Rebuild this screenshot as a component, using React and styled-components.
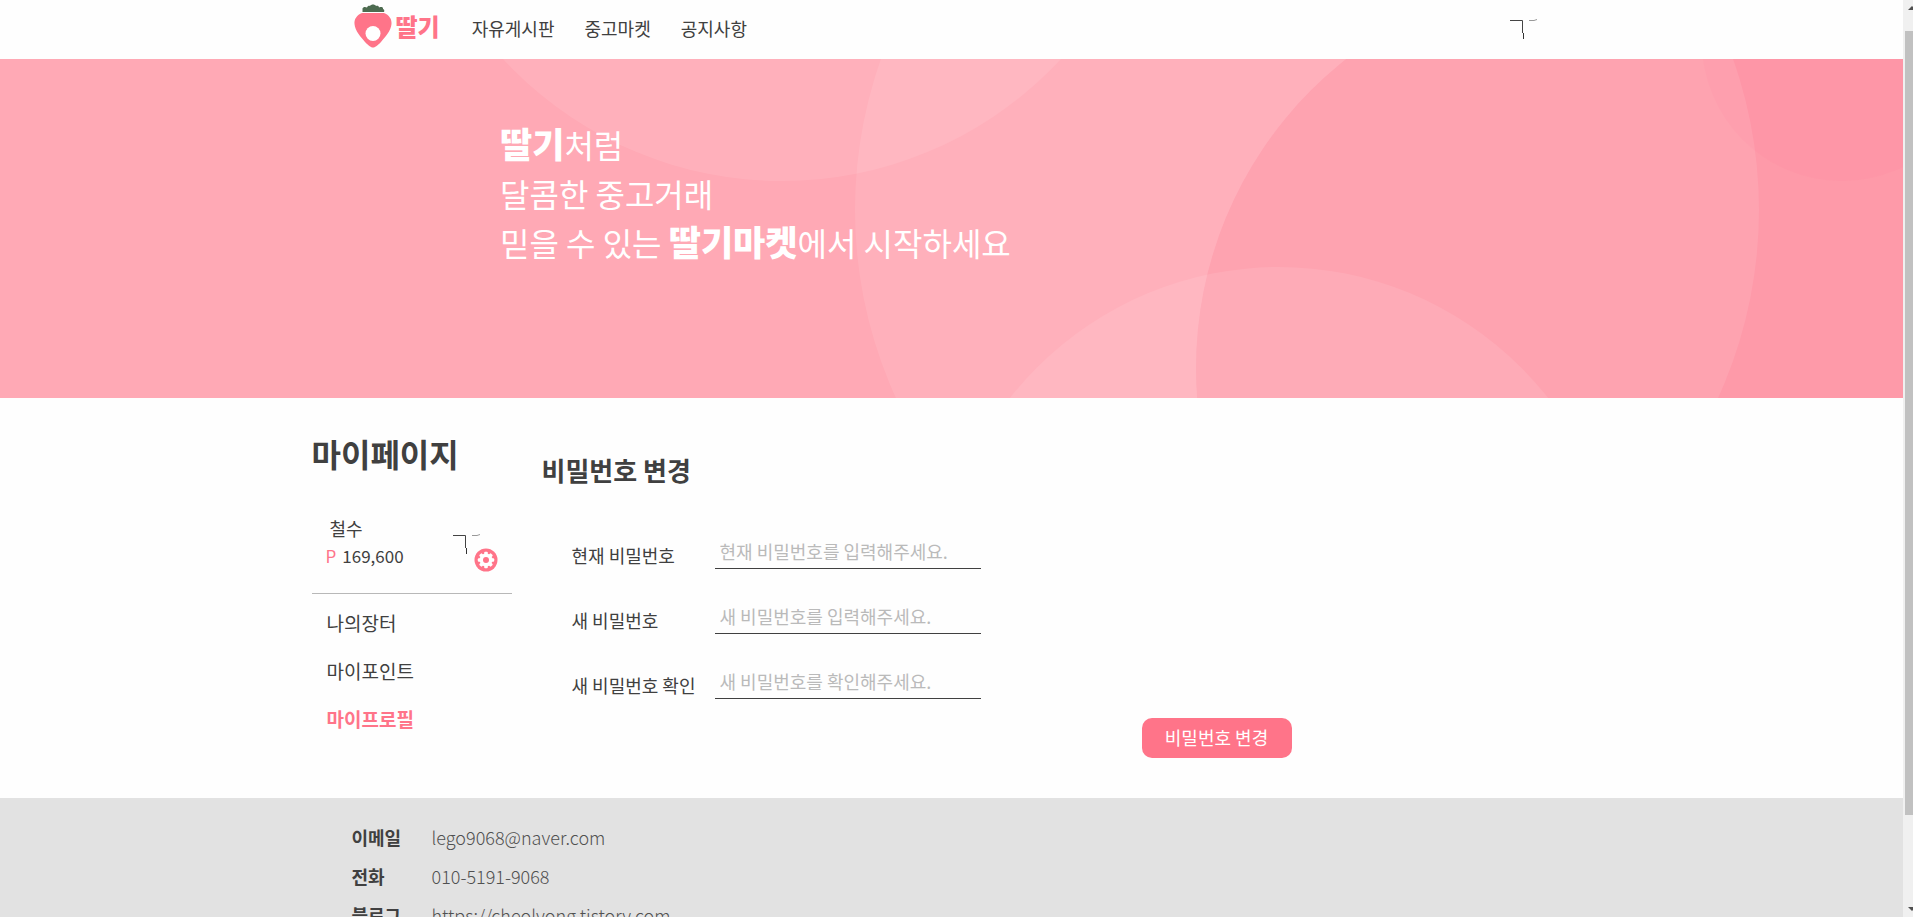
import React from 'react';
import styled, { createGlobalStyle } from 'styled-components';

const menus = ['자유게시판', '중고마켓', '공지사항'];

const sideLinks = [
  { label: '나의장터' },
  { label: '마이포인트' },
  { label: '마이프로필', active: true },
];

const fields = [
  { id: 'current', label: '현재 비밀번호', placeholder: '현재 비밀번호를 입력해주세요.' },
  { id: 'next', label: '새 비밀번호', placeholder: '새 비밀번호를 입력해주세요.' },
  { id: 'confirm', label: '새 비밀번호 확인', placeholder: '새 비밀번호를 확인해주세요.' },
];

const contacts = [
  { label: '이메일', value: 'lego9068@naver.com', href: 'mailto:lego9068@naver.com' },
  { label: '전화', value: '010-5191-9068', href: 'tel:010-5191-9068' },
  { label: '블로그', value: 'https://cheolyong.tistory.com', href: '#blog' },
];

const StrawberryIcon = () => (
  <svg width='38' height='44' viewBox='0 0 38 44' aria-hidden='true'>
    <path
      d='M8 9C3 11 0 15 0.500 20C1 27 7 33 11 38C15 42 17 43.500 19 43.500C21 43.500 23 42 27 38C31 33 37 27 37.500 20C38 15 35 11 30 9Z'
      fill='#ff7489'
    />
    <path
      d='M8.500 8V4.500C9 3 11 2.500 13 3.500C13.500 2 15 1.500 16 2C17 0 21 0 22 2C23.500 1.500 25 2 25 3.500C27 2.500 29.500 3 29 5C30.500 5.500 30.500 7 30 8Z'
      fill='#4d6b50'
    />
    <circle cx='19' cy='29.500' r='7.500' fill='#fff' />
  </svg>
);

const ProfileMark = () => (
  <svg width='28' height='22' viewBox='0 0 28 22' aria-hidden='true'>
    <path d='M0 1.500H12.500V14' fill='none' stroke='#444' strokeWidth='1' />
    <path d='M13.500 14V20' stroke='#333' strokeWidth='1' />
    <path d='M19 1.500H24L27 0.500' fill='none' stroke='#999' strokeWidth='1' />
  </svg>
);

const teeth = [0, 45, 90, 135, 180, 225, 270, 315];

const GearIcon = () => (
  <svg width='24' height='24' viewBox='0 0 24 24' aria-hidden='true'>
    <circle cx='12' cy='12' r='11.500' fill='#ff7489' />
    <circle cx='12' cy='12' r='6.500' fill='#fff' />
    {teeth.map(angle => (
      <rect
        key={angle}
        x='10.200'
        y='3.800'
        width='3.600'
        height='4'
        rx='1'
        fill='#fff'
        transform={`rotate(${angle} 12 12)`}
      />
    ))}
    <circle cx='12' cy='12' r='3' fill='#ff7489' />
  </svg>
);

const BannerArt = () => (
  <Art viewBox='0 59 1903 339' preserveAspectRatio='xMidYMid slice' aria-hidden='true'>
    <rect y='59' width='1903' height='339' fill='#ffa9b5' />
    <path d='M1589 -25A393 393 0 0 0 1589 761H1910V-25Z' fill='#fe9aa9' />
    <circle cx='1842' cy='41' r='140' fill='#ff8fa2' fillOpacity='0.35' />
    <circle cx='1307' cy='210' r='452' fill='#fff' fillOpacity='0.09' />
    <circle cx='782' cy='-199' r='380' fill='#fff' fillOpacity='0.09' />
    <circle cx='1279' cy='609' r='342' fill='#fff' fillOpacity='0.09' />
  </Art>
);

const App = () => (
  <>
    <GlobalStyle />
    <Frame>
      <Page>
        <Header>
          <HeaderInner>
            <Logo href='#home'>
              <StrawberryIcon />
              딸기
            </Logo>
            <Nav>
              {menus.map(menu => <NavLink key={menu} href='#menu'>{menu}</NavLink>)}
            </Nav>
            <ProfileButton aria-label='프로필'>
              <ProfileMark />
            </ProfileButton>
          </HeaderInner>
        </Header>
        <Banner>
          <BannerArt />
          <Slogan>
            <strong>딸기</strong>처럼<br />
            달콤한 중고거래<br />
            믿을 수 있는 <strong>딸기마켓</strong>에서 시작하세요
          </Slogan>
        </Banner>
        <Main>
          <Sidebar>
            <SideTitle>마이페이지</SideTitle>
            <UserCard>
              <div>
                <UserName>철수</UserName>
                <Point><span>P</span>169,600</Point>
              </div>
              <Avatar>
                <ProfileMark />
                <GearButton aria-label='설정'>
                  <GearIcon />
                </GearButton>
              </Avatar>
            </UserCard>
            <SideNav>
              {sideLinks.map(({ label, active }) => (
                <SideLink key={label} href='#mypage' $active={active}>{label}</SideLink>
              ))}
            </SideNav>
          </Sidebar>
          <Form onSubmit={e => e.preventDefault()}>
            <FormTitle>비밀번호 변경</FormTitle>
            {fields.map(({ id, label, placeholder }) => (
              <Field key={id}>
                <Label htmlFor={id}>{label}</Label>
                <Input id={id} type='password' placeholder={placeholder} />
              </Field>
            ))}
            <Submit type='submit'>비밀번호 변경</Submit>
          </Form>
        </Main>
        <Footer>
          <Contacts>
            {contacts.map(({ label, value, href }) => (
              <Contact key={label}>
                <dt>{label}</dt>
                <dd><a href={href}>{value}</a></dd>
              </Contact>
            ))}
          </Contacts>
        </Footer>
      </Page>
      <ScrollBar>
        <Arrow $up />
        <Thumb />
        <Arrow />
      </ScrollBar>
    </Frame>
  </>
);

const GlobalStyle = createGlobalStyle`
  * {
    box-sizing: border-box;
  }
  body {
    margin: 0;
    background-color: #fefefe;
    color: #404040;
    font-family: "Noto Sans CJK KR", sans-serif;
    font-size: 18px;
    line-height: 24px;
  }
  h1, h2, p, dl, dd {
    margin: 0;
  }
  a {
    color: inherit;
    text-decoration: none;
  }
  button, input {
    font: inherit;
    color: inherit;
    border: none;
    padding: 0;
    background: none;
  }
  button {
    cursor: pointer;
  }
`;

const Frame = styled.div`
  display: flex;
  height: 100vh;
  overflow: hidden;
`;

const Page = styled.div`
  flex: 1;
  min-width: 0;
  overflow-y: auto;
  scrollbar-width: none;
`;

const Header = styled.header`
  height: 59px;
`;

const HeaderInner = styled.div`
  display: flex;
  align-items: center;
  max-width: 1200px;
  height: 100%;
  margin: 0 auto;
  padding: 0 14px 8px 2px;
`;

const Logo = styled.a`
  display: flex;
  align-items: center;
  gap: 4px;
  color: #ff7489;
  font-size: 24px;
  font-weight: 900;
`;

const Nav = styled.nav`
  display: flex;
  gap: 30px;
  margin-left: 32px;
  padding-top: 4px;
`;

const NavLink = styled.a`
  font-size: 18px;
`;

const ProfileButton = styled.button`
  display: flex;
  margin-left: auto;
  padding-top: 9px;
`;

const Banner = styled.section`
  position: relative;
  height: 339px;
  padding: 61px 0 0 500px;
`;

const Art = styled.svg`
  position: absolute;
  inset: 0;
  width: 100%;
  height: 100%;
`;

const Slogan = styled.p`
  position: relative;
  color: #fff;
  font-size: 32px;
  line-height: 49px;
  strong {
    font-size: 35px;
    font-weight: 900;
    line-height: 40px;
  }
`;

const Main = styled.main`
  display: flex;
  gap: 30px;
  max-width: 1280px;
  margin: 0 auto;
`;

const Sidebar = styled.aside`
  width: 200px;
  padding-top: 35px;
`;

const SideTitle = styled.h1`
  font-size: 32px;
  line-height: 40px;
`;

const UserCard = styled.div`
  display: flex;
  justify-content: space-between;
  height: 121px;
  padding: 41px 14px 0 14px;
  border-bottom: 1px solid #b8b8b8;
`;

const UserName = styled.p`
  padding-left: 4px;
  line-height: 28px;
`;

const Point = styled.p`
  font-size: 17px;
  line-height: 28px;
  span {
    margin-right: 6px;
    color: #ff7489;
  }
`;

const Avatar = styled.div`
  display: flex;
  flex-direction: column;
  width: 45px;
  padding-top: 20px;
`;

const GearButton = styled.button`
  align-self: flex-end;
  display: flex;
  margin-top: -8px;
`;

const SideNav = styled.nav`
  display: flex;
  flex-direction: column;
  gap: 24px;
  padding: 17px 15px;
`;

const SideLink = styled.a`
  color: ${({ $active }) => ($active ? '#ff7489' : 'inherit')};
  font-size: 19px;
  font-weight: ${({ $active }) => ($active ? 700 : 400)};
`;

const Form = styled.form`
  display: flex;
  flex-direction: column;
  width: 750px;
  padding: 52px 0 40px;
`;

const FormTitle = styled.h2`
  margin-bottom: 47px;
  font-size: 26px;
  line-height: 40px;
`;

const Field = styled.div`
  display: flex;
  align-items: center;
  height: 32px;
  margin-bottom: 33px;
  padding-left: 30px;
`;

const Label = styled.label`
  width: 143px;
  padding-top: 4px;
`;

const Input = styled.input`
  width: 266px;
  height: 32px;
  padding: 0 5px 4px;
  border-bottom: 1px solid #404040;
  border-radius: 0;
  outline: none;
  &::placeholder {
    color: #bababa;
    opacity: 1;
  }
`;

const Submit = styled.button`
  align-self: flex-end;
  width: 150px;
  height: 40px;
  margin-top: -14px;
  padding-bottom: 2px;
  border-radius: 10px;
  background-color: #ff7489;
  color: #fff;
`;

const Footer = styled.footer`
  height: 240px;
  padding-top: 20px;
  background-color: #e2e2e2;
`;

const Contacts = styled.dl`
  max-width: 1200px;
  margin: 0 auto;
`;

const Contact = styled.div`
  display: flex;
  line-height: 39px;
  dt {
    width: 80px;
    font-weight: 700;
  }
  dd {
    color: #505050;
    font-weight: 300;
  }
`;

const ScrollBar = styled.div`
  display: flex;
  flex-direction: column;
  justify-content: space-between;
  width: 10px;
  padding: 6px 0;
  overflow: hidden;
  background-color: #f0f0f0;
`;

const Arrow = styled.div`
  width: 0;
  margin-left: 5px;
  border: 4px solid transparent;
  border-top: ${({ $up }) => ($up ? 'none' : '4px solid #505050')};
  border-bottom: ${({ $up }) => ($up ? '4px solid #505050' : 'none')};
`;

const Thumb = styled.div`
  flex: 1;
  margin: 21px 0 92px 2px;
  background-color: #c1c1c1;
`;

export default App;
